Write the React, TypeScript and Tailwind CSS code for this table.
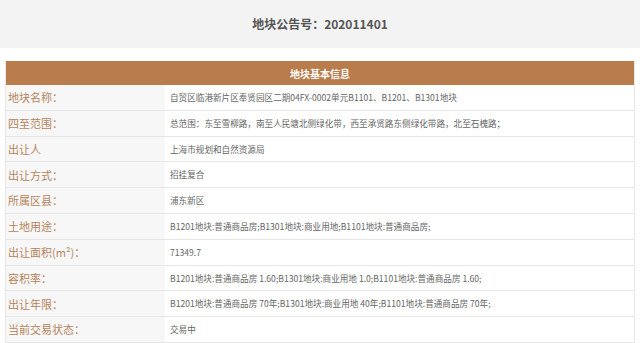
import React from "react";

const rows: [string, string][] = [
  ["地块名称：", "自贸区临港新片区奉贤园区二期04FX-0002单元B1101、B1201、B1301地块"],
  ["四至范围：", "总范围：东至雪柳路，南至人民塘北侧绿化带，西至承贤路东侧绿化带路，北至石槐路；"],
  ["出让人", "上海市规划和自然资源局"],
  ["出让方式：", "招挂复合"],
  ["所属区县：", "浦东新区"],
  ["土地用途：", "B1201地块:普通商品房;B1301地块:商业用地;B1101地块:普通商品房;"],
  ["出让面积(m²)：", "71349.7"],
  ["容积率：", "B1201地块:普通商品房 1.60;B1301地块:商业用地 1.0;B1101地块:普通商品房 1.60;"],
  ["出让年限：", "B1201地块:普通商品房 70年;B1301地块:商业用地 40年;B1101地块:普通商品房 70年;"],
  ["当前交易状态：", "交易中"],
];

export default function App() {
  return (
    <div
      className="w-[640px] h-[343px] overflow-hidden bg-white"
      style={{ fontFamily: '"Noto Sans CJK SC", "Noto Sans", sans-serif' }}
    >
      <div className="h-[48px] bg-[#f3f3f3] flex items-center justify-center">
        <span className="text-[12px] font-semibold text-[#555]">
          地块公告号：202011401
        </span>
      </div>
      <div className="mx-[5px] mt-[13px] border-l border-r border-[#e8e8e8]">
        <div className="h-[24px] bg-[#b97c4c] flex items-center justify-center">
          <span className="text-[10px] font-bold text-white">地块基本信息</span>
        </div>
        {rows.map(([label, value], i) => (
          <div key={i} className="flex h-[25.8px] border-b border-[#e6e6e6]">
            <div className="w-[159px] shrink-0 bg-[#f7f7f7] flex items-center pl-[2px]">
              <span className="text-[11px] text-[#b5845c] whitespace-nowrap">{label}</span>
            </div>
            <div className="flex-1 flex items-center pl-[5px]">
              <span className="text-[8.6px] text-[#666] whitespace-nowrap">{value}</span>
            </div>
          </div>
        ))}
      </div>
    </div>
  );
}
